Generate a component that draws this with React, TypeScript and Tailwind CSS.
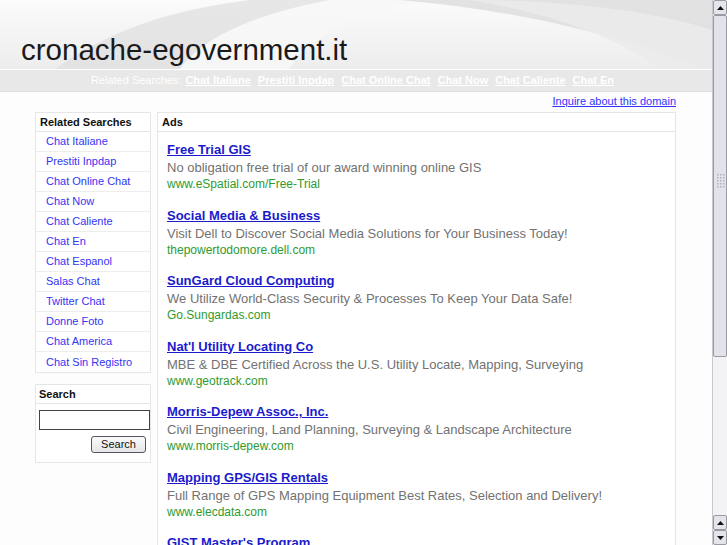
import React from "react";

const sideLinks = [
  "Chat Italiane",
  "Prestiti Inpdap",
  "Chat Online Chat",
  "Chat Now",
  "Chat Caliente",
  "Chat En",
  "Chat Espanol",
  "Salas Chat",
  "Twitter Chat",
  "Donne Foto",
  "Chat America",
  "Chat Sin Registro",
];

const navLinks = ["Chat Italiane", "Prestiti Inpdap", "Chat Online Chat", "Chat Now", "Chat Caliente", "Chat En"];

const ads = [
  { t: "Free Trial GIS", d: "No obligation free trial of our award winning online GIS", u: "www.eSpatial.com/Free-Trial" },
  { t: "Social Media & Business", d: "Visit Dell to Discover Social Media Solutions for Your Business Today!", u: "thepowertodomore.dell.com" },
  { t: "SunGard Cloud Computing", d: "We Utilize World-Class Security & Processes To Keep Your Data Safe!", u: "Go.Sungardas.com" },
  { t: "Nat'l Utility Locating Co", d: "MBE & DBE Certified Across the U.S. Utility Locate, Mapping, Surveying", u: "www.geotrack.com" },
  { t: "Morris-Depew Assoc., Inc.", d: "Civil Engineering, Land Planning, Surveying & Landscape Architecture", u: "www.morris-depew.com" },
  { t: "Mapping GPS/GIS Rentals", d: "Full Range of GPS Mapping Equipment Best Rates, Selection and Delivery!", u: "www.elecdata.com" },
  { t: "GIST Master's Program", d: "Online Geographic Information Science & Technology Degree", u: "www.gistdegree.com" },
];

function Arrow({ up }: { up: boolean }) {
  return (
    <div className="h-[15px] w-[14px] shrink-0 border border-[#9a9aa2] bg-[#e4e4ec] rounded-[2px] flex items-center justify-center">
      <svg width="7" height="4" viewBox="0 0 7 4">
        {up ? <path d="M0 4 L3.5 0 L7 4 Z" fill="#111" /> : <path d="M0 0 L3.5 4 L7 0 Z" fill="#111" />}
      </svg>
    </div>
  );
}

export default function App() {
  return (
    <div className="flex h-[545px] w-[727px] overflow-hidden bg-[#fdfdfd]" style={{ fontFamily: '"Liberation Sans", Arial, sans-serif' }}>
      <div className="flex-1 flex flex-col min-w-0 overflow-hidden">
        {/* header */}
        <div className="relative h-[69px] shrink-0 bg-gradient-to-b from-[#fbfbfb] to-[#ededed] overflow-hidden">
          <svg className="absolute inset-0" width="712" height="69" viewBox="0 0 712 69" preserveAspectRatio="none">
            <path d="M55 69 C 110 30, 170 10, 250 0 L 330 0 C 250 15, 200 40, 180 69 Z" fill="#dedede" opacity="0.7" />
            <path d="M180 69 C 200 40, 250 15, 330 0 L 420 0 C 340 20, 300 45, 290 69 Z" fill="#f7f7f7" opacity="0.8" />
            <path d="M400 0 C 520 10, 640 40, 700 69 L 712 69 L 712 0 Z" fill="#dcdcdc" opacity="0.8" />
            <path d="M470 0 C 560 15, 620 40, 660 69 L 712 69 L 712 30 C 650 10, 560 0, 470 0 Z" fill="#ebebeb" opacity="0.9" />
          </svg>
          <div className="absolute left-[21px] top-[32px] text-[29.5px] leading-[36px] text-[#1a1a1a]">cronache-egovernment.it</div>
        </div>
        {/* nav */}
        <div className="h-[23px] shrink-0 border-t border-t-white border-b border-b-[#dedede] bg-[#e8e8e8] flex items-center justify-center text-[11px] text-white">
          <span className="mr-[4px]">Related Searches:</span>
          {navLinks.map((l) => (
            <span key={l} className="font-bold underline mr-[7px]">{l}</span>
          ))}
        </div>
        {/* body */}
        <div className="flex-1 min-h-0 pl-[35px] pr-[36px]">
          <div className="flex justify-end h-[16px] items-end">
            <a className="text-[11px] leading-[14px] text-[#3333ff] underline">Inquire about this domain</a>
          </div>
          <div className="flex gap-[6px] mt-[4px] items-start">
            <div className="w-[116px] shrink-0 flex flex-col">
              <div className="border border-[#e6e6e6] bg-white">
                <div className="h-[19px] pl-[4px] flex items-center text-[11px] font-bold text-[#111] border-b border-[#e6e6e6]">Related Searches</div>
                {sideLinks.map((l, i) => (
                  <div key={l} className={"h-[20px] pl-[10px] flex items-center text-[11px] text-[#3434f4] " + (i < sideLinks.length - 1 ? "border-b border-[#ededed]" : "")}>
                    {l}
                  </div>
                ))}
              </div>
              <div className="mt-[11px] border border-[#e6e6e6] bg-white h-[79px]">
                <div className="h-[19px] pl-[3px] flex items-center text-[11px] font-bold text-[#111] border-b border-[#e6e6e6]">Search</div>
                <div className="pl-[3px] pt-[6px]">
                  <div className="h-[20px] w-[111px] border border-[#444] bg-white" />
                  <div className="flex justify-end pr-[4px] mt-[6px]">
                    <div className="h-[17px] w-[55px] border border-[#556] rounded-[3px] bg-gradient-to-b from-[#fafafa] to-[#e6e6e6] text-[11px] text-[#111] flex items-center justify-center">Search</div>
                  </div>
                </div>
              </div>
            </div>
            <div className="flex-1 border border-[#e6e6e6] bg-white h-[600px]">
              <div className="h-[19px] pl-[4px] flex items-center text-[11px] font-bold text-[#111] border-b border-[#e6e6e6]">Ads</div>
              <div className="pl-[9px] pt-[9px]">
                {ads.map((a) => (
                  <div key={a.t} className="mb-[13.5px]">
                    <div className="text-[13px] leading-[18px] font-bold text-[#1b1bcc] underline">{a.t}</div>
                    <div className="text-[13px] leading-[17px] text-[#727272]">{a.d}</div>
                    <div className="text-[12px] leading-[17px] text-[#2f9a2f]">{a.u}</div>
                  </div>
                ))}
              </div>
            </div>
          </div>
        </div>
      </div>
      {/* scrollbar */}
      <div className="w-[15px] shrink-0 flex flex-col border-l border-[#c8c8cc] bg-[#f1f1f3]">
        <Arrow up />
        <div className="h-[342px] shrink-0 border border-[#9a9aa2] bg-[#e2e2ea] rounded-[2px] flex flex-col items-center pt-[157px]">
          <svg width="9" height="16" viewBox="0 0 9 16">
            {[0, 3, 6, 9, 12].map((y) =>
              [0, 3, 6].map((x) => <rect key={x + "-" + y} x={x + 1} y={y + 1} width="1.5" height="1.5" fill="#b0b0b8" />)
            )}
          </svg>
        </div>
        <div className="flex-1 bg-[#f3f3f5]" />
        <Arrow up />
        <Arrow up={false} />
      </div>
    </div>
  );
}
